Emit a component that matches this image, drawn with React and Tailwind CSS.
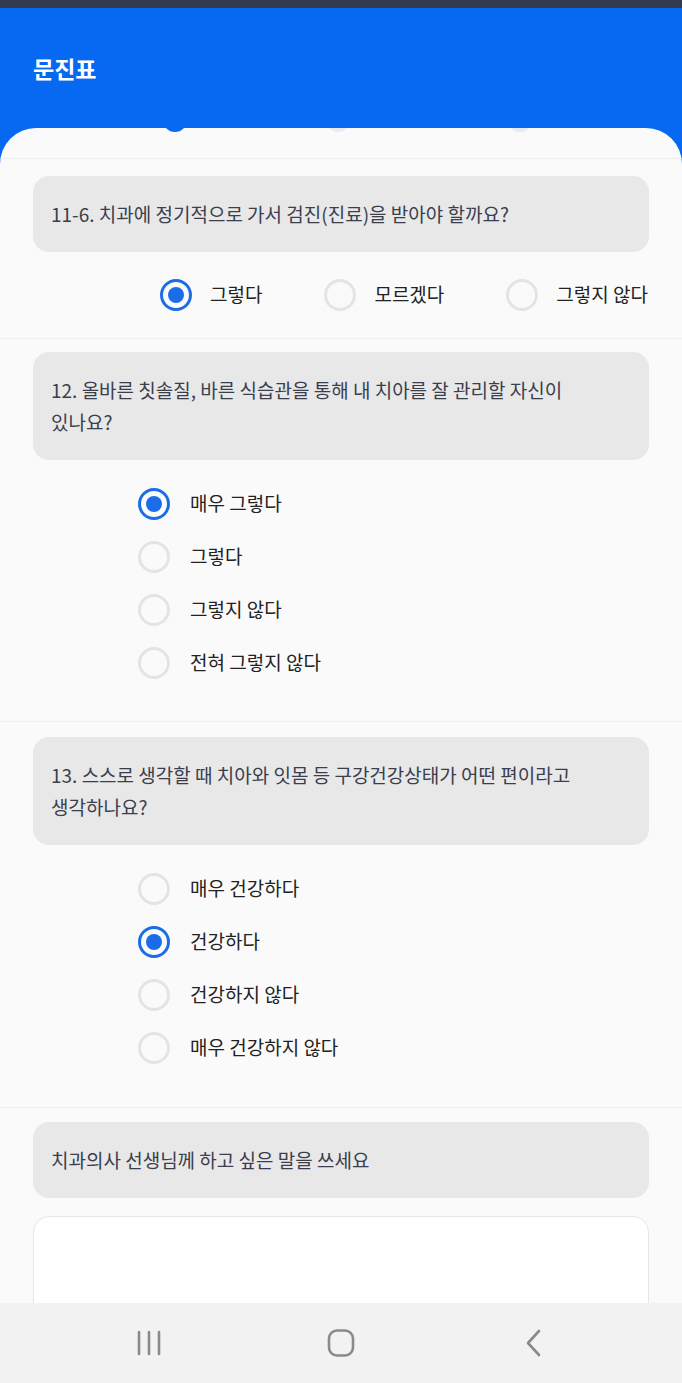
import { useState } from 'react';

const FONT = { fontFamily: '"Noto Sans CJK KR", "Noto Sans", sans-serif' };

function Radio({ checked }) {
  return (
    <span
      className={`flex h-[32px] w-[32px] shrink-0 items-center justify-center rounded-full border-[3px] ${
        checked ? 'border-[#1a6de6]' : 'border-[#e4e4e4]'
      }`}
    >
      {checked && <span className="h-[16px] w-[16px] rounded-full bg-[#1a6de6]" />}
    </span>
  );
}

function QuestionBox({ children }) {
  return (
    <div className="mx-[33px] rounded-[16px] bg-[#e8e8e8] px-[18px] py-[22px] text-[19px] leading-[32px] text-[#3a3e4d]">
      {children}
    </div>
  );
}

function VerticalOptions({ options, value, onChange }) {
  return (
    <div className="pl-[138px] pt-[17px]">
      {options.map((opt, i) => (
        <button
          key={opt}
          onClick={() => onChange(i)}
          className="flex h-[53px] items-center gap-[20px] text-[19px] text-[#222]"
        >
          <Radio checked={value === i} />
          <span>{opt}</span>
        </button>
      ))}
    </div>
  );
}

export default function App() {
  const [q1, setQ1] = useState(0);
  const [q12, setQ12] = useState(0);
  const [q13, setQ13] = useState(1);

  const q1Options = ['그렇다', '모르겠다', '그렇지 않다'];

  return (
    <div className="flex h-screen flex-col overflow-hidden bg-[#0768f2]" style={FONT}>
      {/* status bar */}
      <div className="h-[8px] bg-[#343a50]" />

      {/* header */}
      <div className="flex h-[120px] items-start px-[33px] pt-[44px]">
        <h1 className="text-[23px] font-semibold leading-[32px] text-white">문진표</h1>
      </div>

      {/* card */}
      <div className="flex-1 overflow-hidden rounded-t-[36px] bg-[#fafafa]">
        {/* stepper dots peeking under the edge */}
        <div className="h-[31px] border-b border-[#eeeeee]">
          <div className="flex h-[4px] overflow-hidden">
            <span className="ml-[163px] -mt-[20px] h-[24px] w-[24px] rounded-full bg-[#0768f2]" />
            <span className="ml-[139px] -mt-[20px] h-[24px] w-[24px] rounded-full bg-[#e6ebf5]" />
            <span className="ml-[158px] -mt-[20px] h-[24px] w-[24px] rounded-full bg-[#e6ebf5]" />
          </div>
        </div>

        {/* 11-6 */}
        <div className="border-b border-[#eeeeee] pt-[17px] pb-[17px]">
          <QuestionBox>11-6. 치과에 정기적으로 가서 검진(진료)을 받아야 할까요?</QuestionBox>
          <div className="box-content flex h-[53px] items-center justify-end gap-[62px] pr-[34px] pt-[16px]">
            {q1Options.map((opt, i) => (
              <button
                key={opt}
                onClick={() => setQ1(i)}
                className="flex items-center gap-[18px] text-[19px] text-[#222]"
              >
                <Radio checked={q1 === i} />
                <span>{opt}</span>
              </button>
            ))}
          </div>
        </div>

        {/* 12 */}
        <div className="border-b border-[#eeeeee] pt-[13px] pb-[32px]">
          <QuestionBox>
            12. 올바른 칫솔질, 바른 식습관을 통해 내 치아를 잘 관리할 자신이
            <br />
            있나요?
          </QuestionBox>
          <VerticalOptions
            options={['매우 그렇다', '그렇다', '그렇지 않다', '전혀 그렇지 않다']}
            value={q12}
            onChange={setQ12}
          />
        </div>

        {/* 13 */}
        <div className="border-b border-[#eeeeee] pt-[15px] pb-[33px]">
          <QuestionBox>
            13. 스스로 생각할 때 치아와 잇몸 등 구강건강상태가 어떤 편이라고
            <br />
            생각하나요?
          </QuestionBox>
          <VerticalOptions
            options={['매우 건강하다', '건강하다', '건강하지 않다', '매우 건강하지 않다']}
            value={q13}
            onChange={setQ13}
          />
        </div>

        {/* free text */}
        <div className="pt-[14px]">
          <QuestionBox>치과의사 선생님께 하고 싶은 말을 쓰세요</QuestionBox>
          <textarea className="mx-[33px] mt-[18px] block h-[200px] w-[616px] resize-none rounded-[16px] border border-[#e6e6e6] bg-white p-4 text-[17px] outline-none" />
        </div>
      </div>

      {/* navigation bar */}
      <div className="flex h-[80px] shrink-0 items-center justify-center gap-[162px] bg-[#f2f2f2]">
        <svg width="30" height="30" viewBox="0 0 30 30" fill="none" stroke="#8a8a8a" strokeWidth="2.6" strokeLinecap="round">
          <line x1="5" y1="4" x2="5" y2="26" />
          <line x1="15" y1="4" x2="15" y2="26" />
          <line x1="25" y1="4" x2="25" y2="26" />
        </svg>
        <svg width="30" height="30" viewBox="0 0 30 30" fill="none" stroke="#8a8a8a" strokeWidth="2.6">
          <rect x="3" y="2.5" width="24" height="25" rx="8" />
        </svg>
        <svg width="30" height="30" viewBox="0 0 30 30" fill="none" stroke="#8a8a8a" strokeWidth="2.6" strokeLinecap="round" strokeLinejoin="round">
          <polyline points="21,3 10,15 21,27" />
        </svg>
      </div>
    </div>
  );
}
